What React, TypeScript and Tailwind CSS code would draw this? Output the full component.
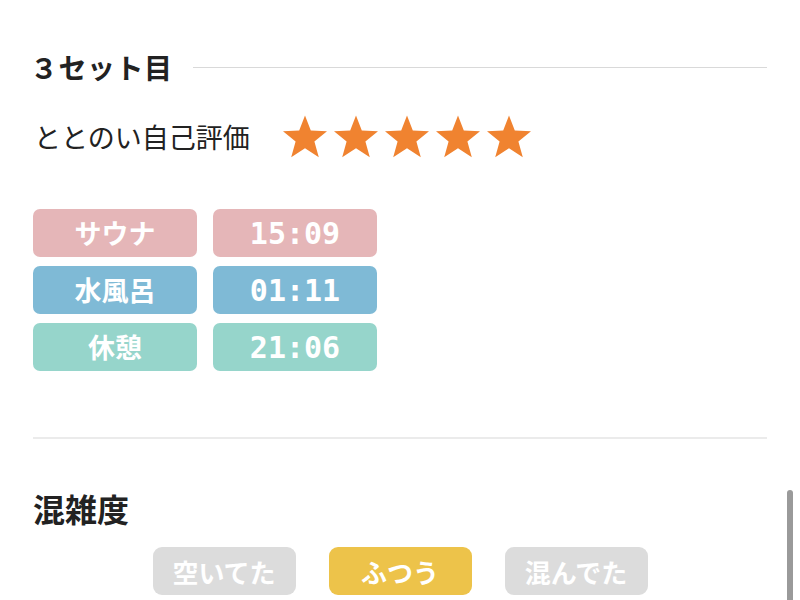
import React from "react";

const jp = { fontFamily: '"Noto Sans CJK JP", "Noto Sans", sans-serif' };
const mono = { fontFamily: '"DejaVu Sans Mono", "Liberation Mono", monospace' };

function Star() {
  return (
    <svg width="48" height="46" viewBox="0 0 24 23">
      <polygon
        points="12,0.8 14.9,8.2 23,8.6 16.7,13.7 18.9,21.6 12,17.1 5.1,21.6 7.3,13.7 1,8.6 9.1,8.2"
        fill="#f08330"
      />
    </svg>
  );
}

const rows = [
  { label: "サウナ", time: "15:09", bg: "bg-[#e5b6b8]" },
  { label: "水風呂", time: "01:11", bg: "bg-[#7fbad6]" },
  { label: "休憩", time: "21:06", bg: "bg-[#96d5cb]" },
];

export default function App() {
  return (
    <div className="relative w-[800px] h-[600px] overflow-hidden bg-white text-[#222]" style={jp}>
      <div className="px-[33px] pt-[46px]">
        <div className="flex items-center gap-[20px]">
          <h2 className="text-[28px] font-bold leading-[42px] tracking-[0.5px] -ml-[3px]">３セット目</h2>
          <div className="flex-1 h-px bg-[#d9d9d9]" />
        </div>
        <div className="flex items-center mt-[26px]">
          <span className="text-[27px] leading-[40px] ml-[1px]">ととのい自己評価</span>
          <div className="flex items-center gap-[3px] ml-[31px]">
            <Star />
            <Star />
            <Star />
            <Star />
            <Star />
          </div>
        </div>
        <div className="mt-[49px] flex flex-col gap-[9px]">
          {rows.map((r) => (
            <div key={r.label} className="flex gap-[16px]">
              <div className={`w-[164px] h-[48px] rounded-[7px] ${r.bg} flex items-center justify-center text-white text-[27px] font-bold`}>
                {r.label}
              </div>
              <div
                className={`w-[164px] h-[48px] rounded-[7px] ${r.bg} flex items-center justify-center text-white text-[30px] font-bold`}
                style={mono}
              >
                {r.time}
              </div>
            </div>
          ))}
        </div>
        <div className="mt-[66px] h-[2px] bg-[#ebebeb]" />
        <h2 className="mt-[47px] text-[32px] font-bold leading-[44px]">混雑度</h2>
        <div className="mt-[17px] flex justify-center gap-[33px]">
          <div className="w-[143px] h-[48px] rounded-[9px] bg-[#dcdcdc] text-white text-[26px] font-bold flex items-center justify-center">空いてた</div>
          <div className="w-[143px] h-[48px] rounded-[9px] bg-[#edc34a] text-white text-[26px] font-bold flex items-center justify-center">ふつう</div>
          <div className="w-[143px] h-[48px] rounded-[9px] bg-[#dcdcdc] text-white text-[26px] font-bold flex items-center justify-center">混んでた</div>
        </div>
      </div>
      <div className="absolute right-[7px] top-[490px] w-[6px] h-[120px] rounded-full bg-[#9a9a9a]" />
    </div>
  );
}
